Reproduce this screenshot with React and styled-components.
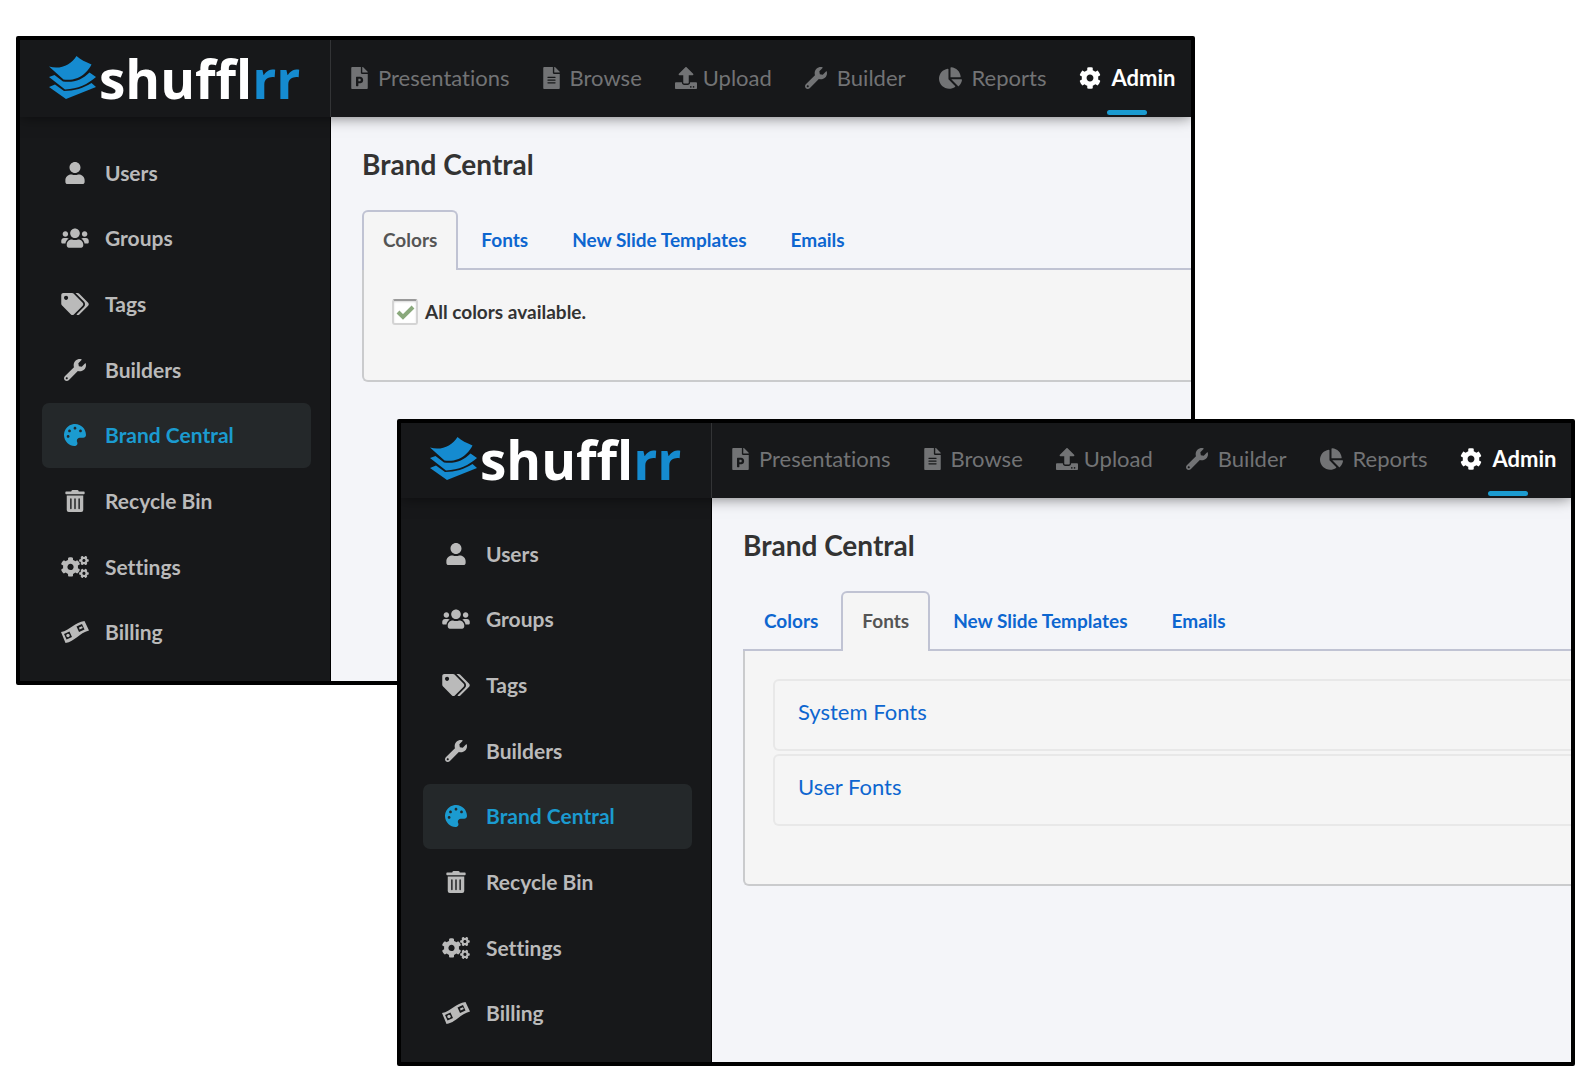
import React, { useState } from "react";
import styled, { createGlobalStyle, css } from "styled-components";
import {
  FaUser, FaUsers, FaTags, FaWrench, FaPalette, FaTrashAlt, FaCogs,
  FaFilePowerpoint, FaFileAlt, FaUpload, FaChartPie, FaCog,
} from "react-icons/fa";

const GlobalStyle = createGlobalStyle`
  *, *::before, *::after { box-sizing: border-box; }
  body {
    margin: 0;
    background: #fff;
    font-family: Lato, "Open Sans", sans-serif;
    font-variant-ligatures: none;
    -webkit-font-smoothing: antialiased;
  }
`;

const Canvas = styled.main`
  display: grid;
  padding: 36px 3px 8px 16px;
`;

const Window = styled.section`
  grid-area: 1 / 1;
  align-self: start;
  min-width: 0;
  margin: ${(p) => (p.$front ? "383px 0 0 381px" : "0 380px 0 0")};
  border: 4px solid #000;
  border-radius: 2px;
  background: #f4f5f9;
  overflow: hidden;
  position: relative;
`;

const Header = styled.header`
  position: relative;
  display: flex;
  height: ${(p) => p.$height}px;
  background: #17181a;
  box-shadow: 0 0 14px rgba(0, 0, 0, 0.55);
`;

const Brand = styled.a`
  flex: none;
  display: flex;
  align-items: flex-end;
  gap: 3px;
  width: 311px;
  padding: 0 0 12px 29px;
  border-right: 1px solid #333436;
  text-decoration: none;
`;

const LogoMark = styled.svg`
  flex: none;
  width: 47px;
  height: 43px;
  margin-bottom: 6px;
`;

const Wordmark = styled.span`
  font: 700 53px/53px "Open Sans", "Noto Sans", sans-serif;
  font-variant-ligatures: none;
  color: #fff;
`;

const Accent = styled.span`
  color: #158bd0;
`;

const TopNav = styled.nav`
  display: flex;
  align-items: flex-end;
  gap: 33px;
  padding-left: 20px;
`;

const TopLink = styled.a`
  position: relative;
  display: flex;
  align-items: center;
  gap: ${(p) => (p.$tight ? 6 : 10)}px;
  height: 77px;
  padding-bottom: 2px;
  font-size: 22px;
  line-height: 28px;
  font-weight: ${(p) => (p.$active ? 700 : 400)};
  color: ${(p) => (p.$active ? "#fff" : "#727375")};
  text-decoration: none;
  white-space: nowrap;
  svg { flex: none; width: ${(p) => p.$iconWidth}px; height: 22px; }
  ${(p) => p.$active && css`
    &::after {
      content: "";
      position: absolute;
      left: calc(50% - 20px);
      bottom: 2px;
      width: 40px;
      height: 5px;
      border-radius: 3px;
      background: #1b9bd0;
    }
  `}
`;

const Body = styled.div`
  display: flex;
`;

const Sidebar = styled.nav`
  flex: none;
  width: 311px;
  padding: 23px 19px 16px 22px;
  border-right: 1px solid #000;
  background: #17181a;
`;

const SideList = styled.ul`
  display: grid;
  grid-auto-rows: 1fr;
  height: 525px;
  margin: 0;
  padding: 0;
  list-style: none;
`;

const SideLink = styled.a`
  display: flex;
  align-items: center;
  gap: 16px;
  height: 100%;
  padding-left: 19px;
  border-radius: 7px;
  background: ${(p) => (p.$active ? "#24282a" : "transparent")};
  color: ${(p) => (p.$active ? "#1b9bd0" : "#bababa")};
  font-size: 21px;
  line-height: 28px;
  font-weight: 700;
  text-decoration: none;
  svg { flex: none; width: 28px; height: 22px; }
`;

const Content = styled.div`
  flex: 1;
  min-width: 0;
  padding: 30px 0 0 31px;
`;

const Title = styled.h1`
  margin: 0 0 29px;
  font-size: 28px;
  line-height: 34px;
  font-weight: 700;
  color: #333;
`;

const TabBar = styled.div`
  display: flex;
  gap: 2px;
  border-bottom: 2px solid #c0c3d3;
`;

const Tab = styled.button`
  height: 60px;
  margin: 0 0 -2px;
  padding: 0 19px 2px;
  border: 2px solid transparent;
  border-bottom: 0;
  border-radius: 6px 6px 0 0;
  background: transparent;
  color: #0d66d0;
  font: 700 19px/24px Lato, sans-serif;
  white-space: nowrap;
  cursor: pointer;
  ${(p) => p.$active && css`
    border-color: #c0c3d3;
    background: #f5f5f5;
    color: #555;
  `}
`;

const Panel = styled.div`
  padding: 28px 0 54px 28px;
  border: 2px solid #cacbcd;
  border-width: 0 0 2px 2px;
  border-radius: 0 0 0 6px;
  background: #f5f5f5;
`;

const CheckLabel = styled.label`
  display: flex;
  align-items: center;
  gap: 7px;
  font-size: 19px;
  line-height: 28px;
  font-weight: 700;
  color: #333;
`;

const CheckBox = styled.span`
  display: grid;
  width: 26px;
  height: 26px;
  svg { grid-area: 1 / 1; place-self: center; pointer-events: none; }
`;

const CheckInput = styled.input`
  grid-area: 1 / 1;
  appearance: none;
  width: 26px;
  height: 26px;
  margin: 0;
  border: 2px solid #d4d4d4;
  border-top-color: #999;
  border-radius: 3px;
  background: #fff;
  box-shadow: inset 0 1px 2px rgba(0, 0, 0, 0.15);
`;

const Accordion = styled.div`
  display: grid;
  gap: 3px;
  padding-bottom: 4px;
`;

const AccordionItem = styled.button`
  height: 72px;
  padding: 0 0 6px 23px;
  border: 2px solid #e8e8e8;
  border-right: 0;
  border-radius: 6px 0 0 6px;
  background: transparent;
  color: #0d66d0;
  font: 400 22px/28px Lato, sans-serif;
  text-align: left;
  cursor: pointer;
`;

const BanknoteIcon = () => (
  <svg viewBox="0 0 28 22" aria-hidden="true">
    <path fill="currentColor" d="M0 11C9 9.500 14 1 23.500 0L28 9.500C18 12 14 20.500 4.500 22Z" />
    <g fill="#17181a">
      <rect x="4" y="11.500" width="6" height="6" transform="rotate(-25 7 14.500)" />
      <rect x="16.500" y="4" width="6" height="6" transform="rotate(-25 19.500 7)" />
    </g>
    <g fill="currentColor">
      <circle cx="7" cy="14.500" r="1.700" />
      <path d="m18 6.500 3-1.300.8 1.700-3.200 1.700Z" />
    </g>
  </svg>
);

const topLinks = [
  { label: "Presentations", Icon: FaFilePowerpoint, iconWidth: 17 },
  { label: "Browse", Icon: FaFileAlt, iconWidth: 17 },
  { label: "Upload", Icon: FaUpload, iconWidth: 22, tight: true },
  { label: "Builder", Icon: FaWrench, iconWidth: 22 },
  { label: "Reports", Icon: FaChartPie, iconWidth: 23 },
  { label: "Admin", Icon: FaCog, iconWidth: 22, active: true },
];

const sideLinks = [
  { label: "Users", Icon: FaUser },
  { label: "Groups", Icon: FaUsers },
  { label: "Tags", Icon: FaTags },
  { label: "Builders", Icon: FaWrench },
  { label: "Brand Central", Icon: FaPalette, active: true },
  { label: "Recycle Bin", Icon: FaTrashAlt },
  { label: "Settings", Icon: FaCogs },
  { label: "Billing", Icon: BanknoteIcon },
];

const tabs = ["Colors", "Fonts", "New Slide Templates", "Emails"];

function Logo() {
  return (
    <Brand href="#home">
      <LogoMark viewBox="0 0 47 43" aria-hidden="true">
        <g fill="#158bd0">
          <path d="M0 10.500C11 14 22 9 27.500 0c4 3.500 9 6 15 8.500-3 6-8 11-14 13.500-5 2-10 2-14 1.500Z" />
          <path d="M0 21l5.500-2 8.500 6.500c11 1.500 19.500-2 26.500-9l6.500 4.500c-8 7-18 12-31 12.500Z" />
          <path d="M0 31l6-2.500 9 6.500c10 0 20-3 27.500-8l4.500 4L17 43Z" />
        </g>
      </LogoMark>
      <Wordmark>shuffl<Accent>rr</Accent></Wordmark>
    </Brand>
  );
}

function AppWindow({ name, front, headerHeight, initialTab }) {
  const [tab, setTab] = useState(initialTab);
  const [allColors, setAllColors] = useState(true);
  const checkId = `${name}-all-colors`;
  return (
    <Window $front={front}>
      <Header $height={headerHeight}>
        <Logo />
        <TopNav>
          {topLinks.map(({ label, Icon, iconWidth, tight, active }) => (
            <TopLink key={label} href={`#${label}`} $iconWidth={iconWidth} $tight={tight} $active={active}>
              <Icon />
              {label}
            </TopLink>
          ))}
        </TopNav>
      </Header>
      <Body>
        <Sidebar>
          <SideList>
            {sideLinks.map(({ label, Icon, active }) => (
              <li key={label}>
                <SideLink href={`#${label}`} $active={active}>
                  <Icon />
                  {label}
                </SideLink>
              </li>
            ))}
          </SideList>
        </Sidebar>
        <Content>
          <Title>Brand Central</Title>
          <TabBar role="tablist">
            {tabs.map((t) => (
              <Tab key={t} role="tab" aria-selected={t === tab} $active={t === tab} onClick={() => setTab(t)}>
                {t}
              </Tab>
            ))}
          </TabBar>
          <Panel role="tabpanel">
            {tab === "Colors" && (
              <CheckLabel htmlFor={checkId}>
                <CheckBox>
                  <CheckInput id={checkId} type="checkbox" checked={allColors} onChange={(e) => setAllColors(e.target.checked)} />
                  {allColors && (
                    <svg width="19" height="17" viewBox="0 0 19 17" aria-hidden="true">
                      <path d="m2 8 5 5L17 3" fill="none" stroke="#8aa97c" strokeWidth="4" />
                    </svg>
                  )}
                </CheckBox>
                All colors available.
              </CheckLabel>
            )}
            {tab === "Fonts" && (
              <Accordion>
                <AccordionItem>System Fonts</AccordionItem>
                <AccordionItem>User Fonts</AccordionItem>
              </Accordion>
            )}
          </Panel>
        </Content>
      </Body>
    </Window>
  );
}

export default function App() {
  return (
    <>
      <GlobalStyle />
      <Canvas>
        <AppWindow name="back" headerHeight={77} initialTab="Colors" />
        <AppWindow name="front" front headerHeight={75} initialTab="Fonts" />
      </Canvas>
    </>
  );
}
